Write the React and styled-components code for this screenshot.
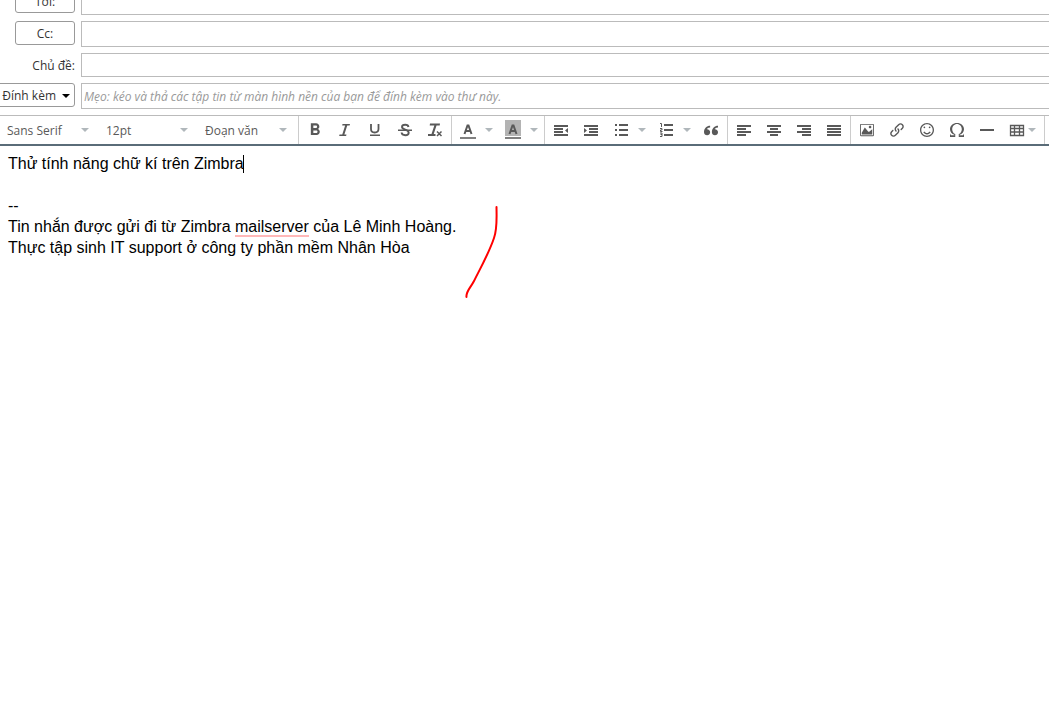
import React from "react";
import styled, { createGlobalStyle } from "styled-components";
import {
  ImImage,
  ImLink,
  ImSmile,
  ImOmega,
  ImQuotesLeft,
} from "react-icons/im";
import { MdFormatBold } from "react-icons/md";

const ui = `"Open Sans", "Noto Sans", sans-serif`;

const GlobalStyle = createGlobalStyle`
  * { box-sizing: border-box; }
  body {
    margin: 0;
    background: #fff;
    overflow: hidden;
    font-family: ${ui};
  }
`;

const Composer = styled.main`
  display: flex;
  flex-direction: column;
  min-height: 100vh;
`;

const Header = styled.form`
  display: flex;
  flex-direction: column;
  gap: 6px;
  margin-top: -11px;
  margin-bottom: 6px;
`;

const HeaderRow = styled.div`
  display: flex;
  gap: 6px;
`;

const LabelCell = styled.div`
  flex: none;
  width: 75px;
  height: 24px;
  display: flex;
  justify-content: flex-end;
  align-items: center;
`;

const FieldLabel = styled.label`
  padding-top: 2px;
  font-size: 12px;
  line-height: 16px;
  color: #333;
  white-space: nowrap;
`;

const HeaderButton = styled.button`
  flex: none;
  width: ${(p) => (p.$wide ? 80 : 60)}px;
  height: 24px;
  padding: 2px ${(p) => (p.$wide ? 4 : 0)}px 0;
  display: flex;
  align-items: center;
  justify-content: ${(p) => (p.$wide ? "flex-end" : "center")};
  gap: 6px;
  border: 1px solid #999;
  border-radius: 3px;
  background: #fff;
  color: #333;
  font: 12px/16px ${ui};
  white-space: nowrap;
`;

const Field = styled.input`
  flex: 1;
  min-width: 0;
  height: ${(p) => (p.$short ? 24 : 26)}px;
  padding: 0 2px;
  border: 1px solid #bbb;
  border-right: 0;
  background: #fff;
  color: #333;
  font: 12px/16px ${ui};
  outline: none;
  &::placeholder {
    color: #999;
    font-style: italic;
    opacity: 1;
  }
`;

const Toolbar = styled.div`
  display: flex;
  height: 31px;
  border-top: 1px solid #bbb;
  border-bottom: 2px solid #5a6c78;
`;

const Group = styled.div`
  flex: none;
  display: flex;
  padding: 0 1px 0 ${(p) => (p.$first ? 0 : 1)}px;
  border-right: 1px solid #ccc;
`;

const ListBox = styled.div`
  display: flex;
  align-items: center;
  width: 99px;
  padding: 0 10px 0 7px;
`;

const ListSelect = styled.select`
  flex: 1;
  min-width: 0;
  appearance: none;
  border: 0;
  padding: 2px 0 0;
  background: none;
  color: #595959;
  font: 12px/20px ${ui};
  outline: none;
`;

const ToolButton = styled.button`
  display: flex;
  align-items: center;
  width: ${(p) => p.$width || 30}px;
  padding: 0 0 0 7px;
  gap: ${(p) => p.$gap || 0}px;
  border: 0;
  background: none;
  color: #595959;
  svg { flex: none; display: block; overflow: visible; }
`;

const Editor = styled.div`
  flex: 1;
  padding: 7px 8px;
  font: 16px/21px "Liberation Sans", Arial, sans-serif;
  color: #000;
  outline: none;
  p { margin: 0; min-height: 21px; }
`;

const Misspelled = styled.span`
  border-bottom: 2px solid #ffb8b8;
`;

const Cursor = styled.span`
  display: inline-block;
  width: 1px;
  height: 18px;
  margin-left: -1px;
  vertical-align: -4px;
  background: #000;
`;

const PenStroke = styled.svg`
  position: absolute;
  left: 460px;
  top: 200px;
  pointer-events: none;
`;

const Caret = ({ color = "#b0b7bb" }) => (
  <svg width="8" height="4" viewBox="0 0 8 4" aria-hidden="true">
    <path d="M0 0h8L4 4z" fill={color} />
  </svg>
);

const Icon = ({ children }) => (
  <svg width="16" height="16" viewBox="0 0 16 16" fill="currentColor" aria-hidden="true">
    {children}
  </svg>
);

const Inset = ({ as: Glyph, size = 14, pad = 1 }) => (
  <Icon>
    <Glyph x={pad} y={pad} size={size} />
  </Icon>
);

const lines = {
  left: "M1 3h14v2H1zM1 6h9v2H1zM1 9h14v2H1zM1 12h9v2H1z",
  center: "M1 3h14v2H1zM4 6h8v2H4zM1 9h14v2H1zM4 12h8v2H4z",
  right: "M1 3h14v2H1zM6 6h9v2H6zM1 9h14v2H1zM6 12h9v2H6z",
  full: "M1 3h14v2H1zM1 6h14v2H1zM1 9h14v2H1zM1 12h14v2H1z",
  outdent: "M1 3h14v2H1zM1 6h9v2H1zM1 9h9v2H1zM1 12h14v2H1zM15 6v5l-3-2.500z",
  indent: "M1 3h14v2H1zM6 6h9v2H6zM6 9h9v2H6zM1 12h14v2H1zM1 6v5l3-2.500z",
  bullets: "M6 2h9v2H6zM6 7h9v2H6zM6 12h9v2H6zM2 2h2v2H2zM2 7h2v2H2zM2 12h2v2H2z",
  numbers: "M6 2h9v2H6zM6 7h9v2H6zM6 12h9v2H6z",
};

const LineIcon = ({ kind }) => (
  <Icon>
    <path d={lines[kind]} />
    {kind === "numbers" && (
      <path
        d="M2 1.500h1.500V5M2 6.500h2v1.500H2.500v1.500H4.500M2 11h2v3.500H2M2.500 12.500H4"
        fill="none"
        stroke="currentColor"
      />
    )}
  </Icon>
);

const ItalicIcon = () => (
  <Icon>
    <path d="M5.500 2H13l-.4 1.500H5.200zM2.500 12.500H9.500L9.100 14H2.200zM8.300 3h2.100L7.200 13H5.100z" />
  </Icon>
);

const UnderlineIcon = () => (
  <Icon>
    <path d="M4 2v5q0 3.500 3.700 3.500T11.500 7V2" fill="none" stroke="currentColor" strokeWidth="1.800" />
    <path d="M3 12.500h10v1.500H3z" />
  </Icon>
);

const StrikeIcon = () => (
  <Icon>
    <path
      d="M11.500 5C11.300 3.500 10 2.800 8.200 2.800C6.200 2.800 5 3.700 5 5.100C5 8.200 11.700 7.200 11.700 10.700C11.700 12.300 10.300 13.200 8.300 13.200C6.200 13.200 4.700 12.200 4.600 10.500"
      fill="none"
      stroke="currentColor"
      strokeWidth="1.900"
    />
    <path d="M1 7.500h14v1.500H1z" />
  </Icon>
);

const ClearIcon = () => (
  <Icon>
    <path d="M3 1.500h10l-.3 2H2.700zM7.500 3h2.200L6.700 12H4.500zM1 12h7.500v2H1z" />
    <path d="M10 9.500l4.500 4.500M14.500 9.500L10 14" fill="none" stroke="currentColor" strokeWidth="1.500" />
  </Icon>
);

const ColorIcon = ({ filled }) => (
  <Icon>
    {filled && <path d="M0 -2h16v16H0z" fill="#b3b3b3" />}
    <path d="M4.500 12L7.500 3.500h1L11.500 12M5.500 9h5" fill="none" stroke="currentColor" strokeWidth="2" />
    <path d="M0 15h16v2H0z" fill="#808080" />
  </Icon>
);

const TableIcon = () => (
  <Icon>
    <path d="M1.500 3.500h13v10h-13zM1.500 6.500h13M1.500 10h13M5.500 3v10M10.500 3v10" fill="none" stroke="currentColor" strokeWidth="1.300" />
  </Icon>
);

const Tool = ({ label, split, width, gap, children }) => (
  <ToolButton type="button" aria-label={label} $width={width || (split ? 45 : 30)} $gap={gap || (split ? 9 : 0)}>
    {children}
    {split && <Caret />}
  </ToolButton>
);

const Choice = ({ label, value }) => (
  <ListBox>
    <ListSelect aria-label={label} defaultValue={value}>
      <option>{value}</option>
    </ListSelect>
    <Caret />
  </ListBox>
);

export default function App() {
  return (
    <Composer>
      <GlobalStyle />
      <Header>
        <HeaderRow>
          <LabelCell>
            <HeaderButton type="button">Tới:</HeaderButton>
          </LabelCell>
          <Field aria-label="Tới" />
        </HeaderRow>
        <HeaderRow>
          <LabelCell>
            <HeaderButton type="button">Cc:</HeaderButton>
          </LabelCell>
          <Field aria-label="Cc" />
        </HeaderRow>
        <HeaderRow>
          <LabelCell>
            <FieldLabel htmlFor="subject">Chủ đề:</FieldLabel>
          </LabelCell>
          <Field id="subject" $short />
        </HeaderRow>
        <HeaderRow>
          <LabelCell>
            <HeaderButton type="button" $wide>
              Đính kèm <Caret color="#000" />
            </HeaderButton>
          </LabelCell>
          <Field
            aria-label="Đính kèm"
            readOnly
            placeholder="Mẹo: kéo và thả các tập tin từ màn hình nền của bạn để đính kèm vào thư này."
          />
        </HeaderRow>
      </Header>

      <Toolbar role="toolbar">
        <Group $first>
          <Choice label="Font" value="Sans Serif" />
          <Choice label="Size" value="12pt" />
          <Choice label="Format" value="Đoạn văn" />
        </Group>
        <Group>
          <Tool label="Bold"><Inset as={MdFormatBold} size={20} pad={-2} /></Tool>
          <Tool label="Italic"><ItalicIcon /></Tool>
          <Tool label="Underline"><UnderlineIcon /></Tool>
          <Tool label="Strikethrough"><StrikeIcon /></Tool>
          <Tool label="Clear formatting"><ClearIcon /></Tool>
        </Group>
        <Group>
          <Tool label="Text color" split><ColorIcon /></Tool>
          <Tool label="Background color" split><ColorIcon filled /></Tool>
        </Group>
        <Group>
          <Tool label="Decrease indent"><LineIcon kind="outdent" /></Tool>
          <Tool label="Increase indent"><LineIcon kind="indent" /></Tool>
          <Tool label="Bullet list" split><LineIcon kind="bullets" /></Tool>
          <Tool label="Numbered list" split><LineIcon kind="numbers" /></Tool>
          <Tool label="Blockquote"><Inset as={ImQuotesLeft} /></Tool>
        </Group>
        <Group>
          <Tool label="Align left"><LineIcon kind="left" /></Tool>
          <Tool label="Align center"><LineIcon kind="center" /></Tool>
          <Tool label="Align right"><LineIcon kind="right" /></Tool>
          <Tool label="Justify"><LineIcon kind="full" /></Tool>
        </Group>
        <Group>
          <Tool label="Insert image"><Inset as={ImImage} /></Tool>
          <Tool label="Insert link"><Inset as={ImLink} /></Tool>
          <Tool label="Emoticons"><Inset as={ImSmile} /></Tool>
          <Tool label="Special character"><Inset as={ImOmega} /></Tool>
          <Tool label="Horizontal line"><Icon><path d="M1 7h14v2H1z" /></Icon></Tool>
          <Tool label="Table" split width={41} gap={3}><TableIcon /></Tool>
        </Group>
      </Toolbar>

      <Editor contentEditable suppressContentEditableWarning spellCheck={false} role="textbox" aria-multiline="true" aria-label="Message">
        <p>Thử tính năng chữ kí trên Zimbra<Cursor /></p>
        <p />
        <p>--</p>
        <p>
          Tin nhắn được gửi đi từ Zimbra <Misspelled>mailserver</Misspelled> của Lê Minh Hoàng.
        </p>
        <p>Thực tập sinh IT support ở công ty phần mềm Nhân Hòa</p>
      </Editor>

      <PenStroke width="44" height="104" viewBox="0 0 44 104" aria-hidden="true">
        <path
          d="M36.500 7C36.500 17 37.500 28 34 38C29 53 20 69 14 81C11 87 5.500 92 6.500 97"
          fill="none"
          stroke="#f00"
          strokeWidth="2"
          strokeLinecap="round"
        />
      </PenStroke>
    </Composer>
  );
}
